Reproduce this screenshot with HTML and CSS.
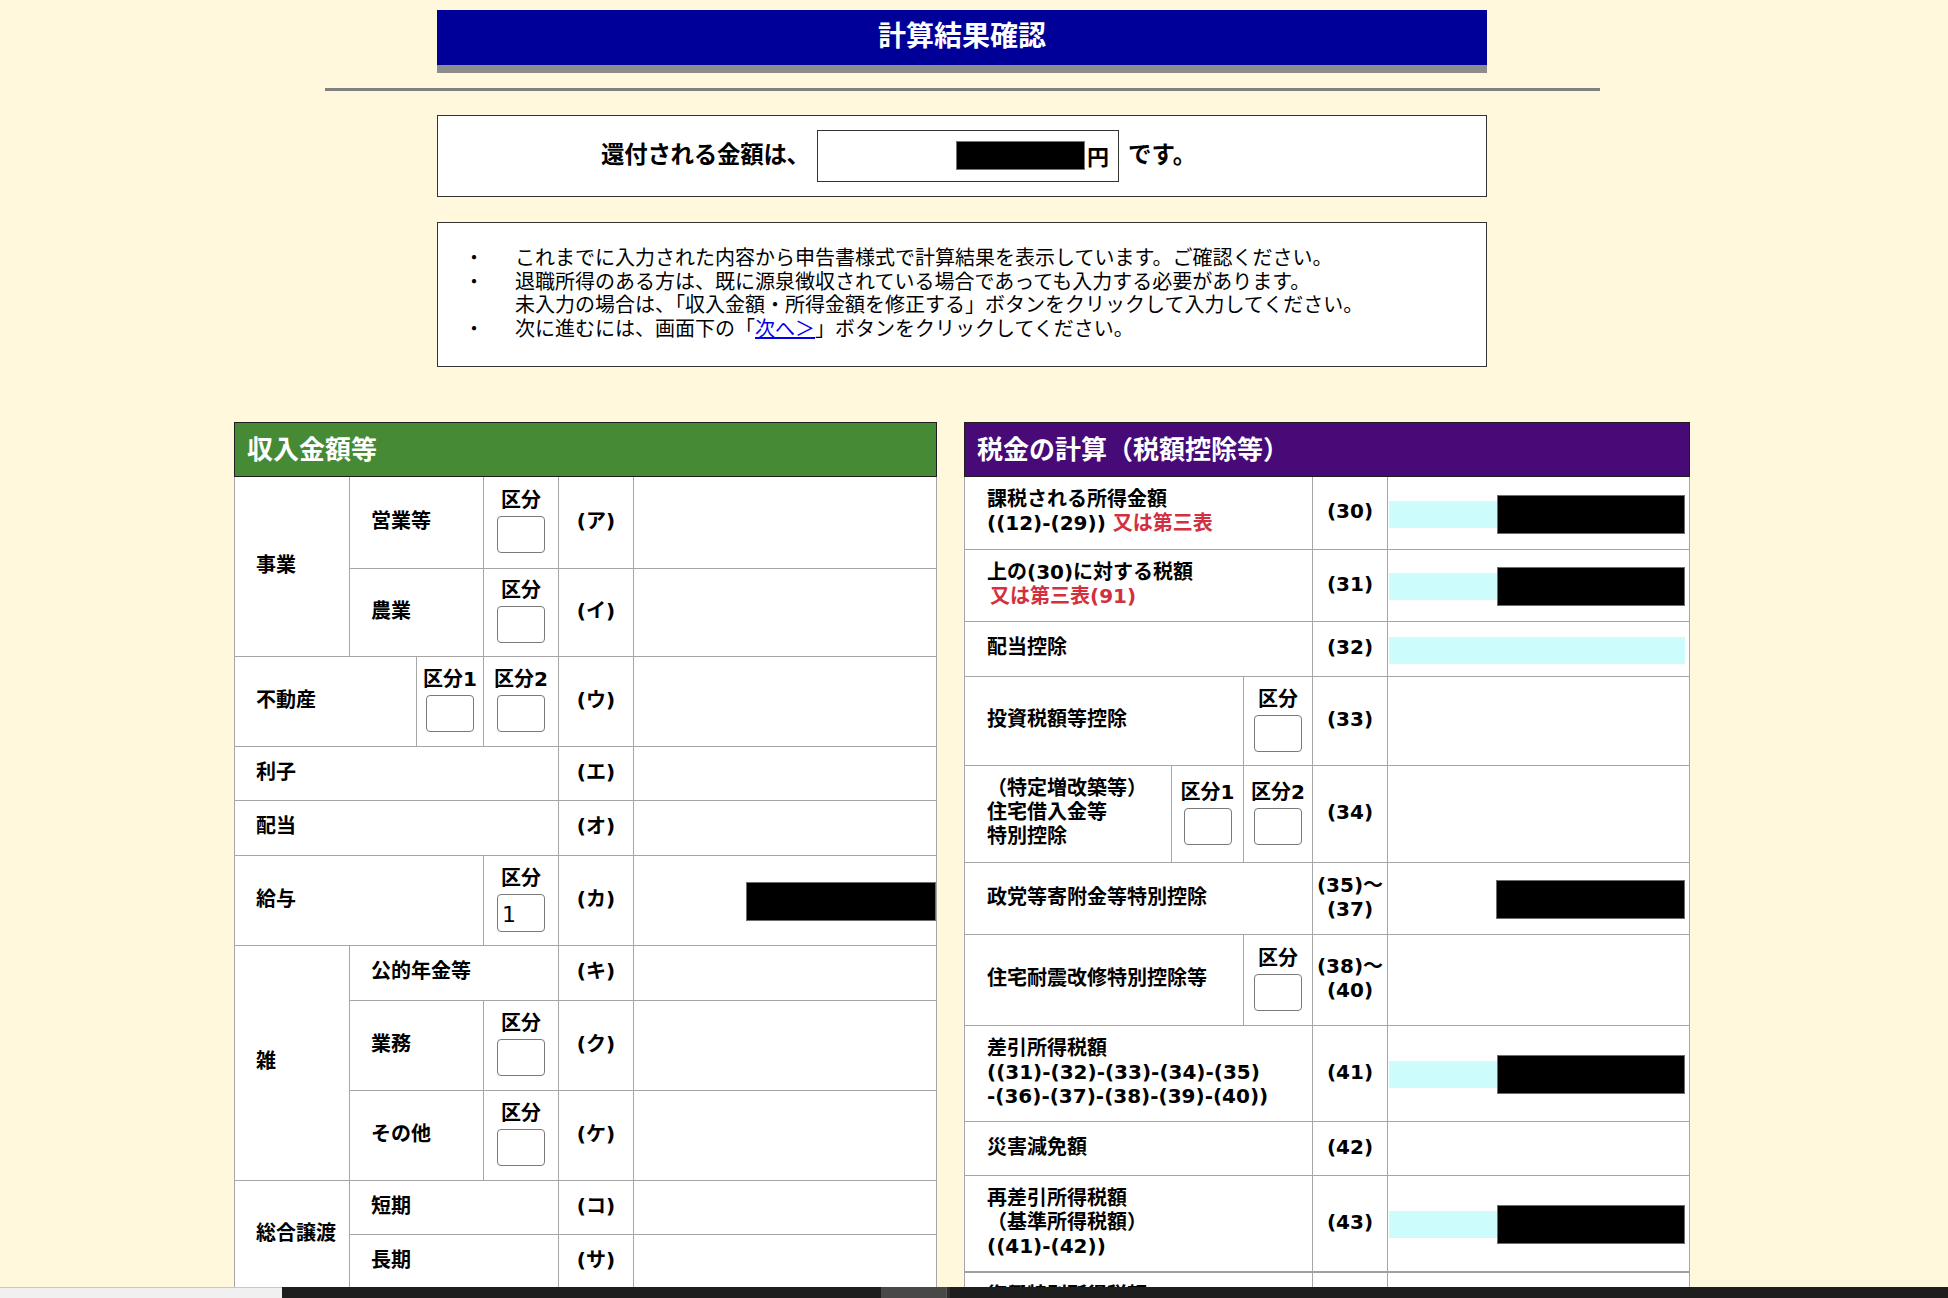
FILE: index.html
```html
<!DOCTYPE html>
<html lang="ja">
<head>
<meta charset="utf-8">
<title>計算結果確認</title>
<link rel="stylesheet" href="styles.css">
</head>
<body>
<div class="wrap">
  <div class="title">計算結果確認</div>
  <div class="rule"></div>

  <div class="refund">
    <span class="refund-lbl">還付される金額は、</span>
    <span class="refund-box"><span class="redact"></span><span class="yen">円</span></span>
    <span class="refund-tail">です。</span>
  </div>

  <div class="notes">
    <div class="note"><span class="dot">・</span><span>これまでに入力された内容から申告書様式で計算結果を表示しています。ご確認ください。</span></div>
    <div class="note"><span class="dot">・</span><span>退職所得のある方は、既に源泉徴収されている場合であっても入力する必要があります。<br>未入力の場合は、「収入金額・所得金額を修正する」ボタンをクリックして入力してください。</span></div>
    <div class="note"><span class="dot">・</span><span>次に進むには、画面下の「<a href="#" class="lnk">次へ＞</a>」ボタンをクリックしてください。</span></div>
  </div>

  <div class="panels">
    <section class="panel left">
      <div class="ph green">収入金額等</div>
      <table class="tbl">
        <colgroup><col style="width:115px"><col style="width:67px"><col style="width:67px"><col style="width:75px"><col style="width:75px"><col></colgroup>
        <tr class="h91">
          <td class="lbl" rowspan="2">事業</td>
          <td class="lbl" colspan="2">営業等</td>
          <td class="kb"><div class="kbl">区分</div><div class="box"></div></td>
          <td class="no">(ア)</td>
          <td class="val"></td>
        </tr>
        <tr class="h88">
          <td class="lbl" colspan="2">農業</td>
          <td class="kb"><div class="kbl">区分</div><div class="box"></div></td>
          <td class="no">(イ)</td>
          <td class="val"></td>
        </tr>
        <tr class="h90">
          <td class="lbl" colspan="2">不動産</td>
          <td class="kb"><div class="kbl">区分1</div><div class="box"></div></td>
          <td class="kb"><div class="kbl">区分2</div><div class="box"></div></td>
          <td class="no">(ウ)</td>
          <td class="val"></td>
        </tr>
        <tr class="h54">
          <td class="lbl" colspan="4">利子</td>
          <td class="no">(エ)</td>
          <td class="val"></td>
        </tr>
        <tr class="h55">
          <td class="lbl" colspan="4">配当</td>
          <td class="no">(オ)</td>
          <td class="val"></td>
        </tr>
        <tr class="h90">
          <td class="lbl" colspan="3">給与</td>
          <td class="kb"><div class="kbl">区分</div><div class="box v1">1</div></td>
          <td class="no">(カ)</td>
          <td class="val"><div class="vw"><span class="blk"></span></div></td>
        </tr>
        <tr class="h55">
          <td class="lbl" rowspan="3">雑</td>
          <td class="lbl" colspan="3">公的年金等</td>
          <td class="no">(キ)</td>
          <td class="val"></td>
        </tr>
        <tr class="h90">
          <td class="lbl" colspan="2">業務</td>
          <td class="kb"><div class="kbl">区分</div><div class="box"></div></td>
          <td class="no">(ク)</td>
          <td class="val"></td>
        </tr>
        <tr class="h90">
          <td class="lbl" colspan="2">その他</td>
          <td class="kb"><div class="kbl">区分</div><div class="box"></div></td>
          <td class="no">(ケ)</td>
          <td class="val"></td>
        </tr>
        <tr class="h54">
          <td class="lbl" rowspan="2">総合譲渡</td>
          <td class="lbl" colspan="3">短期</td>
          <td class="no">(コ)</td>
          <td class="val"></td>
        </tr>
        <tr class="h55">
          <td class="lbl" colspan="3">長期</td>
          <td class="no">(サ)</td>
          <td class="val"></td>
        </tr>
        <tr class="h55">
          <td class="lbl" colspan="4">一時</td>
          <td class="no">(シ)</td>
          <td class="val"></td>
        </tr>
      </table>
    </section>

    <section class="panel right">
      <div class="ph purple">税金の計算（税額控除等）</div>
      <table class="tbl rt">
        <colgroup><col style="width:207px"><col style="width:72px"><col style="width:69px"><col style="width:75px"><col></colgroup>
        <tr class="h72">
          <td class="lbl" colspan="3">課税される所得金額<br>((12)-(29)) <span class="red">又は第三表</span></td>
          <td class="no">(30)</td>
          <td class="val"><div class="vw"><span class="cy"></span><span class="blk"></span></div></td>
        </tr>
        <tr class="h72">
          <td class="lbl" colspan="3">上の(30)に対する税額<br><span class="red ind">又は第三表(91)</span></td>
          <td class="no">(31)</td>
          <td class="val"><div class="vw"><span class="cy"></span><span class="blk"></span></div></td>
        </tr>
        <tr class="h55">
          <td class="lbl" colspan="3">配当控除</td>
          <td class="no">(32)</td>
          <td class="val"><div class="vw"><span class="cy full"></span></div></td>
        </tr>
        <tr class="h89">
          <td class="lbl" colspan="2">投資税額等控除</td>
          <td class="kb"><div class="kbl">区分</div><div class="box"></div></td>
          <td class="no">(33)</td>
          <td class="val"></td>
        </tr>
        <tr class="h97">
          <td class="lbl">（特定増改築等）<br>住宅借入金等<br>特別控除</td>
          <td class="kb"><div class="kbl">区分1</div><div class="box"></div></td>
          <td class="kb"><div class="kbl">区分2</div><div class="box"></div></td>
          <td class="no">(34)</td>
          <td class="val"></td>
        </tr>
        <tr class="h72">
          <td class="lbl" colspan="3">政党等寄附金等特別控除</td>
          <td class="no nw">(35)～<br>(37)</td>
          <td class="val"><div class="vw"><span class="blk"></span></div></td>
        </tr>
        <tr class="h91">
          <td class="lbl" colspan="2">住宅耐震改修特別控除等</td>
          <td class="kb"><div class="kbl">区分</div><div class="box"></div></td>
          <td class="no nw">(38)～<br>(40)</td>
          <td class="val"></td>
        </tr>
        <tr class="h96">
          <td class="lbl" colspan="3">差引所得税額<br>((31)-(32)-(33)-(34)-(35)<br>-(36)-(37)-(38)-(39)-(40))</td>
          <td class="no">(41)</td>
          <td class="val"><div class="vw"><span class="cy"></span><span class="blk"></span></div></td>
        </tr>
        <tr class="h54">
          <td class="lbl" colspan="3">災害減免額</td>
          <td class="no">(42)</td>
          <td class="val"></td>
        </tr>
        <tr class="h97">
          <td class="lbl" colspan="3">再差引所得税額<br>（基準所得税額）<br>((41)-(42))</td>
          <td class="no">(43)</td>
          <td class="val"><div class="vw"><span class="cy"></span><span class="blk"></span></div></td>
        </tr>
        <tr class="h72 dbl">
          <td class="lbl" colspan="3">復興特別所得税額<br>((43)×2.1%)</td>
          <td class="no">(44)</td>
          <td class="val"><div class="vw"><span class="cy"></span><span class="blk"></span></div></td>
        </tr>
      </table>
    </section>
  </div>
</div>

<div class="bottombar">
  <div class="bb-light"></div>
  <div class="bb-dark1"></div>
  <div class="bb-thumb"></div>
  <div class="bb-sep"></div>
  <div class="bb-dark2"></div>
</div>
</body>
</html>
```

FILE: styles.css
```css
html, body {
  overflow: hidden;
}
body {
  margin: 0;
  background: #fff8dc;
  font-family: "Noto Sans CJK JP", "Noto Sans", sans-serif;
  color: #000;
}
.wrap {
  width: 1924px;
  padding-top: 10px;
}
.title {
  width: 1050px;
  height: 55px;
  margin: 0 auto;
  background: #000099;
  border-bottom: 8px solid #8c8c8c;
  color: #fff;
  font-size: 28px;
  font-weight: 700;
  line-height: 49px;
  text-align: center;
}
.rule {
  width: 1275px;
  height: 3px;
  margin: 15px auto 0;
  background: #808080;
}
.refund {
  box-sizing: border-box;
  width: 1050px;
  height: 82px;
  margin: 24px auto 0;
  padding-left: 163px;
  padding-bottom: 6px;
  border: 1px solid #333;
  background: #fff;
  display: flex;
  align-items: center;
  font-size: 23.5px;
  font-weight: 700;
}
.refund-lbl {
  width: 202px;
  white-space: nowrap;
  letter-spacing: -0.3px;
}
.refund-box {
  box-sizing: border-box;
  width: 302px;
  height: 52px;
  margin-left: 14px;
  margin-right: 9px;
  margin-top: 6px;
  border: 1px solid #333;
  display: flex;
  align-items: center;
  justify-content: flex-end;
  padding-right: 9px;
  padding-bottom: 2px;
}
.redact {
  box-sizing: border-box;
  width: 129px;
  height: 29px;
  background: #000;
  border: 1px solid #777;
}
.yen {
  margin-left: 2px;
  font-size: 22px;
}
.notes {
  width: 1048px;
  margin: 25px auto 0;
  padding: 22px 0 27px 0;
  border: 1px solid #333;
  background: #fff;
  font-size: 20px;
  line-height: 23.5px;
}
.note {
  display: flex;
  padding-left: 26px;
}
.dot {
  flex: 0 0 51px;
}
.lnk {
  color: #0000ee;
  text-decoration: underline;
}
.panels {
  width: 1456px;
  margin: 55px auto 0;
  display: flex;
  gap: 27px;
  align-items: flex-start;
}
.panel.left {
  width: 703px;
}
.panel.right {
  width: 726px;
}
.ph {
  box-sizing: border-box;
  height: 55px;
  border: 1px solid #1e1e1e;
  padding-left: 12px;
  color: #fff;
  font-size: 26px;
  font-weight: 700;
  line-height: 49px;
}
.green {
  background: #468a35;
}
.purple {
  background: #470a77;
}
.tbl {
  width: 100%;
  table-layout: fixed;
  border-collapse: collapse;
  background: #fff;
  font-family: "DejaVu Sans", "Noto Sans CJK JP", sans-serif;
  font-size: 20px;
  line-height: 24px;
  font-weight: 700;
}
.tbl td {
  border: 1px solid #a6a6a6;
  padding: 0 0 3px 0;
  vertical-align: middle;
}
.tbl tr:first-child td {
  border-top: none;
}
.tbl td.lbl {
  padding-left: 21px;
}
.rt td.lbl {
  padding-left: 22px;
}
.no {
  text-align: center;
}
.nw {
  white-space: nowrap;
}
.kb {
  text-align: center;
}
.kbl {
  line-height: 24px;
}
.box {
  box-sizing: border-box;
  width: 48px;
  height: 37px;
  margin: 4px auto 0;
  border: 1px solid #7a7a7a;
  border-radius: 4px;
  background: #fff;
}
.box.v1 {
  height: 38px;
  text-align: left;
  padding-left: 4px;
  font-family: "DejaVu Sans", sans-serif;
  font-size: 22px;
  font-weight: 400;
  line-height: 40px;
}
.vw {
  display: flex;
  justify-content: flex-end;
  align-items: center;
}
.tbl td.val {
  padding: 3px 0 0 0;
}
.rt td.val {
  padding: 3px 4px 0 1px;
}
.cy {
  width: 109px;
  height: 27px;
  background: #ccfcfc;
}
.cy.full {
  width: 298px;
}
.blk {
  box-sizing: border-box;
  width: 190px;
  height: 39px;
  background: #000;
  border: 1px solid #6e6e6e;
}
.rt .blk {
  width: 189px;
}
.red {
  color: #d2303e;
}
.ind {
  padding-left: 3px;
}
.h54 { height: 54px; }
.h55 { height: 55px; }
.h72 { height: 72px; }
.h88 { height: 88px; }
.h89 { height: 89px; }
.h90 { height: 90px; }
.h91 { height: 91px; }
.h96 { height: 96px; }
.h97 { height: 97px; }
.dbl td {
  border-top: 2px solid #a0a0a0;
}
.bottombar {
  position: fixed;
  left: 0;
  bottom: 0;
  width: 100%;
  height: 11px;
  display: flex;
}
.bb-light {
  width: 282px;
  background: #f0f0f0;
  border-top: 1px solid #c8c8c8;
  box-sizing: border-box;
}
.bb-dark1 {
  width: 599px;
  background: #1e1e1e;
}
.bb-thumb {
  width: 65px;
  background: #484848;
}
.bb-sep {
  width: 4px;
  background: #2c2c2c;
  border-left: 1px solid #5a5a5a;
  box-sizing: border-box;
}
.bb-dark2 {
  flex: 1;
  background: #1e1e1e;
}
```
